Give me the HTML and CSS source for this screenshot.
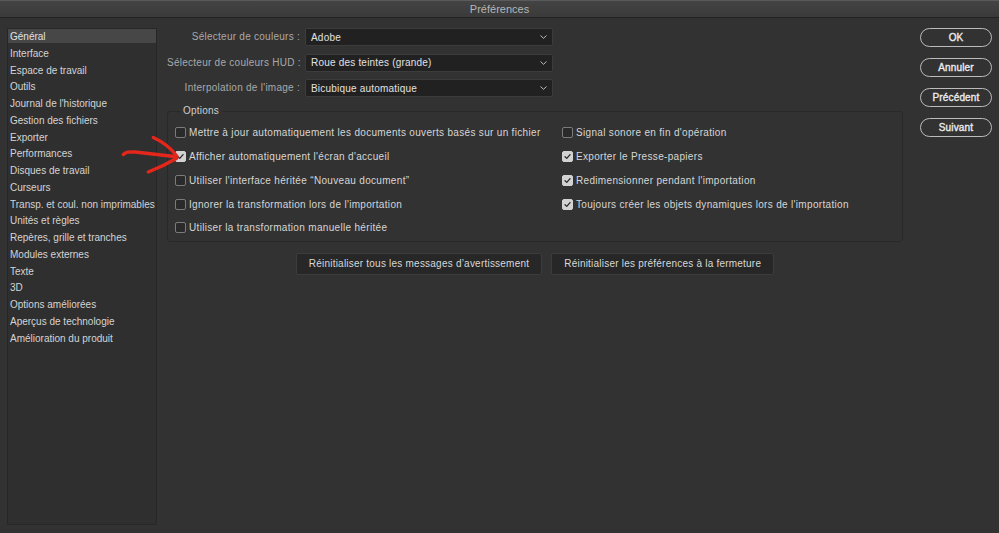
FILE: index.html
```html
<!DOCTYPE html>
<html lang="fr">
<head>
<meta charset="utf-8">
<title>Préférences</title>
<link rel="stylesheet" href="styles.css">
</head>
<body>
<div class="titlebar">Préférences</div>
<div class="main">
  <nav class="sidebar">
    <div class="item active">Général</div>
    <div class="item">Interface</div>
    <div class="item">Espace de travail</div>
    <div class="item">Outils</div>
    <div class="item">Journal de l'historique</div>
    <div class="item">Gestion des fichiers</div>
    <div class="item">Exporter</div>
    <div class="item">Performances</div>
    <div class="item">Disques de travail</div>
    <div class="item">Curseurs</div>
    <div class="item">Transp. et coul. non imprimables</div>
    <div class="item">Unités et règles</div>
    <div class="item">Repères, grille et tranches</div>
    <div class="item">Modules externes</div>
    <div class="item">Texte</div>
    <div class="item">3D</div>
    <div class="item">Options améliorées</div>
    <div class="item">Aperçus de technologie</div>
    <div class="item">Amélioration du produit</div>
  </nav>
  <div class="content">
    <div class="form">
      <div class="lbl">Sélecteur de couleurs :</div>
      <div class="select"><span>Adobe</span><svg class="chev" viewBox="0 0 7 4"><path d="M0.5 0.5 L3.5 3.3 L6.5 0.5"/></svg></div>
      <div class="lbl">Sélecteur de couleurs HUD :</div>
      <div class="select"><span>Roue des teintes (grande)</span><svg class="chev" viewBox="0 0 7 4"><path d="M0.5 0.5 L3.5 3.3 L6.5 0.5"/></svg></div>
      <div class="lbl">Interpolation de l'image :</div>
      <div class="select"><span>Bicubique automatique</span><svg class="chev" viewBox="0 0 7 4"><path d="M0.5 0.5 L3.5 3.3 L6.5 0.5"/></svg></div>
    </div>
    <fieldset class="options">
      <legend>Options</legend>
      <div class="grid">
        <div class="cb"><span class="box"></span>Mettre à jour automatiquement les documents ouverts basés sur un fichier</div>
        <div class="cb"><span class="box on"><svg viewBox="0 0 11 11"><path d="M2.5 5.8 L4.6 7.8 L8.6 3.2"/></svg></span>Afficher automatiquement l'écran d'accueil</div>
        <div class="cb"><span class="box"></span>Utiliser l'interface héritée “Nouveau document”</div>
        <div class="cb"><span class="box"></span>Ignorer la transformation lors de l'importation</div>
        <div class="cb"><span class="box"></span>Utiliser la transformation manuelle héritée</div>
        <div class="cb"><span class="box"></span>Signal sonore en fin d'opération</div>
        <div class="cb"><span class="box on"><svg viewBox="0 0 11 11"><path d="M2.5 5.8 L4.6 7.8 L8.6 3.2"/></svg></span>Exporter le Presse-papiers</div>
        <div class="cb"><span class="box on"><svg viewBox="0 0 11 11"><path d="M2.5 5.8 L4.6 7.8 L8.6 3.2"/></svg></span>Redimensionner pendant l'importation</div>
        <div class="cb"><span class="box on"><svg viewBox="0 0 11 11"><path d="M2.5 5.8 L4.6 7.8 L8.6 3.2"/></svg></span>Toujours créer les objets dynamiques lors de l'importation</div>
      </div>
    </fieldset>
    <div class="resets">
      <button class="rbtn">Réinitialiser tous les messages d’avertissement</button>
      <button class="rbtn">Réinitialiser les préférences à la fermeture</button>
    </div>
  </div>
  <div class="actions">
    <button class="pill">OK</button>
    <button class="pill">Annuler</button>
    <button class="pill">Précédent</button>
    <button class="pill">Suivant</button>
  </div>
</div>
<svg class="arrow" viewBox="0 0 70 46">
  <path d="M8.3 22.5 C11 19.8 13 19.8 20 20 L61.7 24.7"/>
  <path d="M38.3 5.5 C48 10 56 16 61.7 24"/>
  <path d="M61.7 26.3 C52 32 44 36 33.3 40"/>
</svg>
</body>
</html>
```
FILE: styles.css
```css
* { box-sizing: border-box; }
html, body { margin: 0; padding: 0; }
body {
  width: 999px;
  height: 533px;
  overflow: hidden;
  background: #323232;
  font-family: "Liberation Sans", Arial, sans-serif;
  font-size: 10px;
  color: #d6d6d6;
  position: relative;
}
.titlebar {
  height: 18px;
  background: linear-gradient(#444444, #3a3a3a);
  border-top: 1px solid #5a5a5a;
  border-bottom: 1px solid #222222;
  text-align: center;
  font-size: 11px;
  line-height: 16px;
  color: #b6b6b6;
}
.main {
  display: flex;
  height: 515px;
  padding: 10px 7px 8px 7px;
}
.sidebar {
  width: 150px;
  flex: none;
  border: 1px solid #272727;
  background: #2f2f2f;
  padding-top: 0;
}
.item {
  height: 14px;
  line-height: 15px;
  margin-bottom: 2.75px;
  padding-left: 2px;
  white-space: nowrap;
  color: #d4d4d4;
}
.item.active { background: #474747; color: #e2e2e2; }
.content {
  width: 736px;
  flex: none;
  margin-left: 10px;
}
.form {
  display: grid;
  grid-template-columns: 133px 248px;
  column-gap: 5px;
  row-gap: 7.5px;
}
.lbl {
  text-align: right;
  line-height: 18px;
  color: #a9a9a9;
  white-space: nowrap;
  letter-spacing: 0.26px;
}
.select {
  height: 18px;
  border: 1px solid #3c3c3c;
  border-radius: 2px;
  background: #212121;
  display: flex;
  align-items: center;
  justify-content: space-between;
  padding: 0 5px 0 5px;
  color: #e2e2e2;
  letter-spacing: 0.2px;
}
.chev { width: 7px; height: 4px; fill: none; stroke: #bdbdbd; stroke-width: 1; }
.options {
  margin: 8px 0 0 0;
  padding: 0 0 1px 0;
  border: 1px solid #292929;
  border-radius: 3px;
  min-width: 0;
}
.options legend {
  margin-left: 12px;
  padding: 0 3px;
  line-height: 12px;
  color: #cfcfcf;
  letter-spacing: 0.2px;
}
.grid {
  display: grid;
  grid-auto-flow: column;
  grid-template-rows: repeat(5, 23.75px);
  grid-template-columns: 387px 1fr;
  padding: 4px 0 0 7px;
}
.cb {
  display: flex;
  align-items: center;
  white-space: nowrap;
  color: #d6d6d6;
  letter-spacing: 0.32px;
}
.box {
  width: 11px;
  height: 11px;
  margin-right: 3px;
  border: 1px solid #7b7b7b;
  border-radius: 2px;
  background: #2a2a2a;
  flex: none;
  display: flex;
}
.box.on { background: #d2d2d2; border-color: #d2d2d2; }
.box svg { width: 9px; height: 9px; fill: none; stroke: #2a2a2a; stroke-width: 1.6; stroke-linecap: round; stroke-linejoin: round; }
.resets {
  margin-top: 11px;
  display: flex;
  justify-content: center;
  gap: 9px;
}
.rbtn {
  height: 22px;
  padding: 0 12px;
  background: #272727;
  border: 1px solid #3c3c3c;
  border-radius: 2px;
  color: #d8d8d8;
  font-family: inherit;
  font-size: 10px;
  letter-spacing: 0.22px;
}
.actions {
  width: 72px;
  flex: none;
  margin-left: 17px;
  display: flex;
  flex-direction: column;
  gap: 11px;
}
.pill {
  height: 19px;
  border: 1px solid #bcbcbc;
  border-radius: 10px;
  background: transparent;
  color: #ececec;
  font-family: inherit;
  font-size: 10px;
  font-weight: normal;
  -webkit-text-stroke: 0.35px #ececec;
  letter-spacing: 0.15px;
  padding: 0;
}
.arrow {
  position: absolute;
  left: 115px;
  top: 132px;
  width: 70px;
  height: 46px;
  fill: none;
  stroke: #e5261b;
  stroke-width: 3.4;
  stroke-linecap: round;
  stroke-linejoin: round;
}
```
